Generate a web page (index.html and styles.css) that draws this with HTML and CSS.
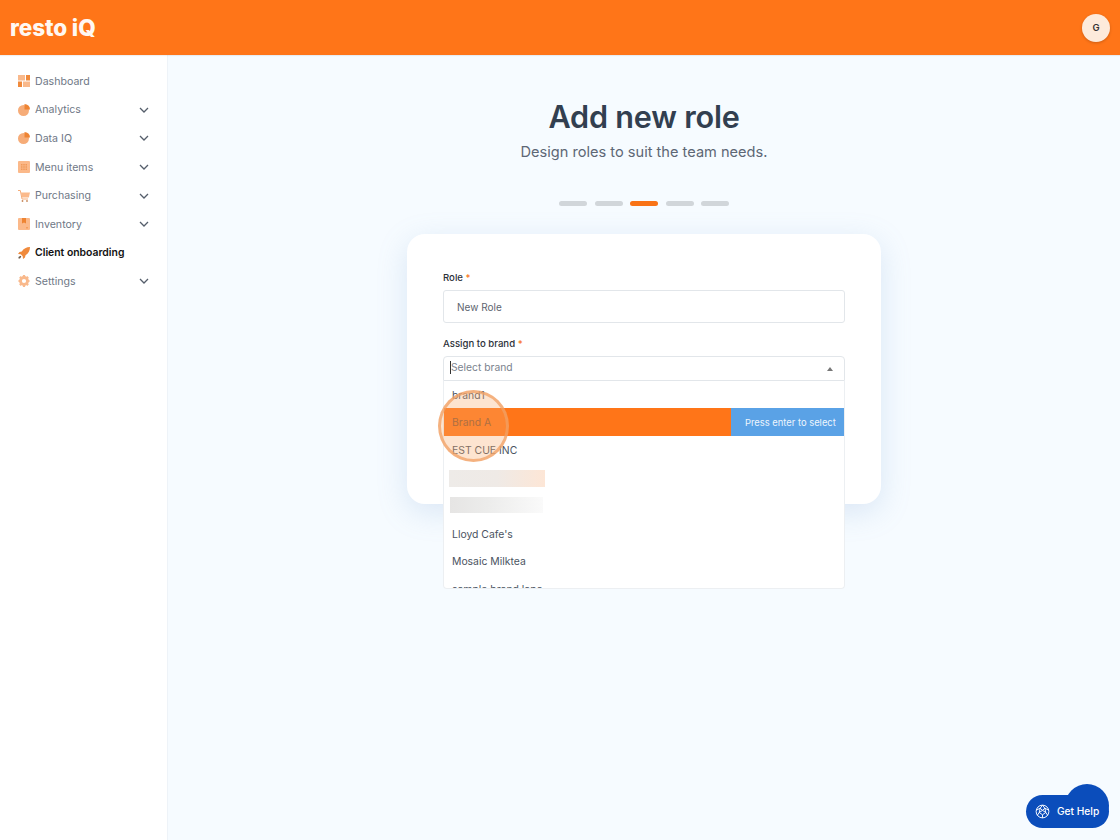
FILE: index.html
```html
<!DOCTYPE html>
<html lang="en">
<head>
<meta charset="utf-8">
<title>Add new role</title>
<link rel="stylesheet" href="styles.css">
</head>
<body>
<header class="topbar">
  <div class="logo">resto iQ</div>
  <div class="avatar">G</div>
</header>
<div class="shell">
  <nav class="sidebar">
    <a class="nav-item"><svg class="nav-icon" viewBox="0 0 12 12"><path fill="#f9b98c" d="M0 0h7v5.500H0z"/><path fill="#f08a3c" d="M8 0h4v5.500H8zM0 6.500h4V12H0z"/><path fill="#f9b98c" d="M5 6.500h7V12H5z"/></svg><span class="nav-label">Dashboard</span></a>
    <a class="nav-item"><svg class="nav-icon" viewBox="0 0 12 12"><circle cx="5.500" cy="6.500" r="5.500" fill="#f6ac78"/><path fill="#ee8433" d="M6.500 0a5.500 5.500 0 0 1 5.500 5.500H6.500z"/></svg><span class="nav-label">Analytics</span><svg class="chev" viewBox="0 0 10 6"><path d="M1 1l4 4 4-4"/></svg></a>
    <a class="nav-item"><svg class="nav-icon" viewBox="0 0 12 12"><circle cx="5.500" cy="6.500" r="5.500" fill="#f6ac78"/><path fill="#ee8433" d="M6.500 0a5.500 5.500 0 0 1 5.500 5.500H6.500z"/></svg><span class="nav-label">Data IQ</span><svg class="chev" viewBox="0 0 10 6"><path d="M1 1l4 4 4-4"/></svg></a>
    <a class="nav-item"><svg class="nav-icon" viewBox="0 0 12 12"><rect width="12" height="12" rx="1" fill="#fbb98a"/><path fill="#f09a5a" d="M3 3h1.500v1.500H3zM5.250 3h1.500v1.500h-1.500zM7.500 3H9v1.500H7.500zM3 5.250h1.500v1.500H3zM5.250 5.250h1.500v1.500h-1.500zM7.500 5.250H9v1.500H7.500zM3 7.500h1.500V9H3zM5.250 7.500h1.500V9h-1.500zM7.500 7.500H9V9H7.500z"/></svg><span class="nav-label">Menu items</span><svg class="chev" viewBox="0 0 10 6"><path d="M1 1l4 4 4-4"/></svg></a>
    <a class="nav-item"><svg class="nav-icon" viewBox="0 0 12 12"><path fill="#fbb98a" d="M3 2.500h9l-1.200 5H4z"/><path fill="none" stroke="#f6ac78" d="M0 .5h2.300l1.700 8.500h6"/><circle cx="4.500" cy="11" r=".9" fill="#c98a5c"/><circle cx="9" cy="11" r=".9" fill="#c98a5c"/></svg><span class="nav-label">Purchasing</span><svg class="chev" viewBox="0 0 10 6"><path d="M1 1l4 4 4-4"/></svg></a>
    <a class="nav-item"><svg class="nav-icon" viewBox="0 0 12 12"><rect width="12" height="12" rx="1" fill="#fbb98a"/><path fill="#ee8433" d="M4 0h4v5.500L6 4.500l-2 1zM8 9.500h2v.8H8z"/></svg><span class="nav-label">Inventory</span><svg class="chev" viewBox="0 0 10 6"><path d="M1 1l4 4 4-4"/></svg></a>
    <a class="nav-item active"><svg class="nav-icon" viewBox="0 0 12 12"><path fill="#f08a3c" d="M12 0C8.500 0 5.500 1.500 3.800 4.500L1.500 5 0 7l2.800.3 1.900 1.900L5 12l2-1.500.5-2.300C10.500 6.500 12 3.500 12 0z"/><path fill="#6b5a4a" d="M.5 10l2-1.300.8.800-1.300 2H.5z"/></svg><span class="nav-label">Client onboarding</span></a>
    <a class="nav-item"><svg class="nav-icon" viewBox="0 0 12 12"><circle cx="6" cy="6" r="3.500" fill="none" stroke="#f9b98c" stroke-width="2.800"/><path stroke="#f9b98c" stroke-width="2.200" d="M6 0v2M6 10v2M.5 6h2M9.500 6h2M1.900 1.900l1.400 1.400M8.700 8.700l1.400 1.400M1.900 10.100l1.400-1.400M8.700 3.300l1.400-1.400"/></svg><span class="nav-label">Settings</span><svg class="chev" viewBox="0 0 10 6"><path d="M1 1l4 4 4-4"/></svg></a>
  </nav>
  <main class="content">
    <h1 class="title">Add new role</h1>
    <p class="subtitle">Design roles to suit the team needs.</p>
    <div class="steps">
      <span class="step"></span><span class="step"></span><span class="step current"></span><span class="step"></span><span class="step"></span>
    </div>
    <section class="card">
      <div class="field">
        <label class="field-label">Role <span class="req">*</span></label>
        <div class="input">New Role</div>
      </div>
      <div class="field">
        <label class="field-label">Assign to brand <span class="req">*</span></label>
        <div class="select">
          <div class="select-box"><span class="caret"></span><span class="placeholder">Select brand</span><span class="arrow"></span></div>
          <div class="menu">
            <div class="option first">brand1</div>
            <div class="option focused"><span class="option-text">Brand A</span><span class="hint">Press enter to select</span></div>
            <div class="option">EST CUE INC</div>
            <div class="option"><span class="blur blur-a"></span></div>
            <div class="option"><span class="blur blur-b"></span></div>
            <div class="option">Lloyd Cafe's</div>
            <div class="option">Mosaic Milktea</div>
            <div class="option">sample brand lapa</div>
          </div>
          <span class="click-ring"></span>
        </div>
      </div>
    </section>
  </main>
</div>
<button class="help"><svg class="help-icon" viewBox="0 0 16 16"><g fill="none" stroke="#fff" stroke-width="1"><circle cx="8" cy="8" r="6.800"/><path d="M8 1.200 5.500 4.500 8 6.800l2.500-2.300zM1.500 6.500l4-2M14.500 6.500l-4-2M5.500 4.500 4.500 9 8 11.500 11.500 9l-1-4.500M8 6.800 4.500 9M8 6.800 11.500 9M8 11.500v3.300M4.500 9 2.500 12M11.500 9l2 3"/></g></svg><span>Get Help</span></button>
</body>
</html>
```
FILE: styles.css
```css
* { box-sizing: border-box; }
html, body { margin: 0; padding: 0; }
body {
  width: 1120px;
  height: 840px;
  overflow: hidden;
  background: #f6fbff;
  font-family: Inter, "Liberation Sans", sans-serif;
  color: #3a4654;
  position: relative;
}
.topbar {
  height: 55px;
  background: #ff7518;
  display: flex;
  align-items: center;
  justify-content: space-between;
  padding: 0 10px;
  box-shadow: 0 1px 1px rgba(0,0,0,.06);
  position: relative;
  z-index: 2;
}
.logo {
  font-weight: 800;
  font-size: 22.500px;
  letter-spacing: -.1px;
  color: #fff8f2;
  padding-bottom: 1px;
}
.avatar {
  width: 28px;
  height: 28px;
  border-radius: 50%;
  background: #fdeadb;
  color: #333;
  font-size: 9.500px;
  font-weight: 600;
  display: flex;
  align-items: center;
  justify-content: center;
  box-shadow: 0 1px 3px rgba(0,0,0,.2);
}
.shell { display: flex; height: 785px; }
.sidebar {
  width: 168px;
  flex: none;
  background: #fff;
  border-right: 1px solid #eef3f8;
  padding-top: 12px;
}
.nav-item {
  height: 28.600px;
  display: flex;
  align-items: center;
  padding: 0 19px 0 18px;
  font-size: 10.600px;
  color: #6f7886;
}
.nav-item.active { color: #111; font-weight: 600; font-size: 10.400px; }
.nav-icon { width: 12px; height: 12px; flex: none; margin-right: 5px; }
.nav-label { flex: 1; white-space: nowrap; }
.chev { width: 10px; height: 6px; flex: none; margin-right: -1px; fill: none; stroke: #555e6b; stroke-width: 1.300; }
.content { flex: 1; display: flex; flex-direction: column; align-items: center; }
.title {
  margin: 44px 0 0;
  font-size: 30.600px;
  line-height: 36px;
  font-weight: 600;
  color: #323f50;
  letter-spacing: -.2px;
}
.subtitle { margin: 7px 0 0; font-size: 14.600px; line-height: 20px; color: #5d6775; }
.steps { display: flex; gap: 7.500px; margin-top: 39px; }
.step { width: 28px; height: 5px; border-radius: 3px; background: #d1d6da; }
.step.current { background: #f97316; }
.card {
  width: 474px;
  height: 270px;
  margin-top: 28px;
  padding: 37px 36px 0;
  background: #fff;
  border-radius: 18px;
  box-shadow: 0 8px 30px rgba(120,160,210,.22);
}
.field { margin-bottom: 14px; }
.field-label { display: block; font-size: 9.600px; line-height: 14px; font-weight: 500; color: #2c3138; margin-bottom: 5px; }
.req { color: #f97316; }
.input {
  height: 33px;
  border: 1px solid #e2e6ea;
  border-radius: 3px;
  padding-left: 13px;
  display: flex;
  align-items: center;
  font-size: 10px;
  color: #5d6570;
}
.select { position: relative; }
.select-box {
  height: 25px;
  border: 1px solid #e2e6ea;
  border-radius: 4px 4px 0 0;
  background: #fff;
  display: flex;
  align-items: center;
  padding-left: 6px;
  font-size: 10.300px;
  color: #7b838e;
}
.caret { width: 1px; height: 13px; background: #333; margin-bottom: 3px; }
.placeholder { flex: 1; margin-bottom: 3px; }
.arrow {
  width: 0;
  height: 0;
  margin-right: 11px;
  border-left: 3.500px solid transparent;
  border-right: 3.500px solid transparent;
  border-bottom: 4px solid #777;
}
.menu {
  position: absolute;
  left: 0;
  right: 0;
  top: 25px;
  height: 208px;
  overflow: hidden;
  background: #fff;
  border: 1px solid #eceff2;
  border-top: 0;
  border-radius: 0 0 4px 4px;
  z-index: 3;
}
.option {
  height: 27.900px;
  display: flex;
  align-items: center;
  padding: 1px 0 0 8px;
  font-size: 10.400px;
  color: #4a5361;
  white-space: nowrap;
}
.option.first { height: 27px; }
.option.focused { background: #ff7518; padding: 0; color: #8a5330; align-items: stretch; }
.option-text { flex: 1; display: flex; align-items: center; padding: 1px 0 0 8px; }
.hint { width: 113px; padding: 1px 0 0 14px; background: #5aa2e6; color: #eef6fd; font-size: 9.400px; display: flex; align-items: center; }
.blur { display: block; height: 17px; margin-left: -3px; }
.blur-a { width: 96px; background: linear-gradient(90deg, #eeebe8 0%, #efeae6 50%, #fde6d6 100%); }
.blur-b { width: 93px; height: 16px; margin-left: -2px; margin-top: -2px; background: linear-gradient(90deg, #e6e5e4 0%, #ececeb 40%, #fafafa 100%); }
.click-ring {
  position: absolute;
  left: -5.500px;
  top: 34px;
  width: 71px;
  height: 72px;
  border-radius: 50%;
  background: rgba(250,170,110,.32);
  border: 3px solid rgba(240,160,100,.75);
  z-index: 4;
}
.help {
  position: absolute;
  right: 11px;
  bottom: 12px;
  width: 83px;
  height: 33px;
  padding: 0 0 1px 9px;
  border: 0;
  border-radius: 17px;
  background: #0b4dbb;
  color: #fff;
  display: flex;
  align-items: center;
  gap: 7px;
  font-family: Inter, sans-serif;
  font-size: 10.200px;
  font-weight: 500;
  z-index: 5;
}
.help::before {
  content: "";
  position: absolute;
  right: 0;
  bottom: 0;
  width: 44px;
  height: 44px;
  border-radius: 50%;
  background: #0b4dbb;
}
.help-icon, .help span { position: relative; }
.help-icon { width: 15px; height: 15px; flex: none; }
```
